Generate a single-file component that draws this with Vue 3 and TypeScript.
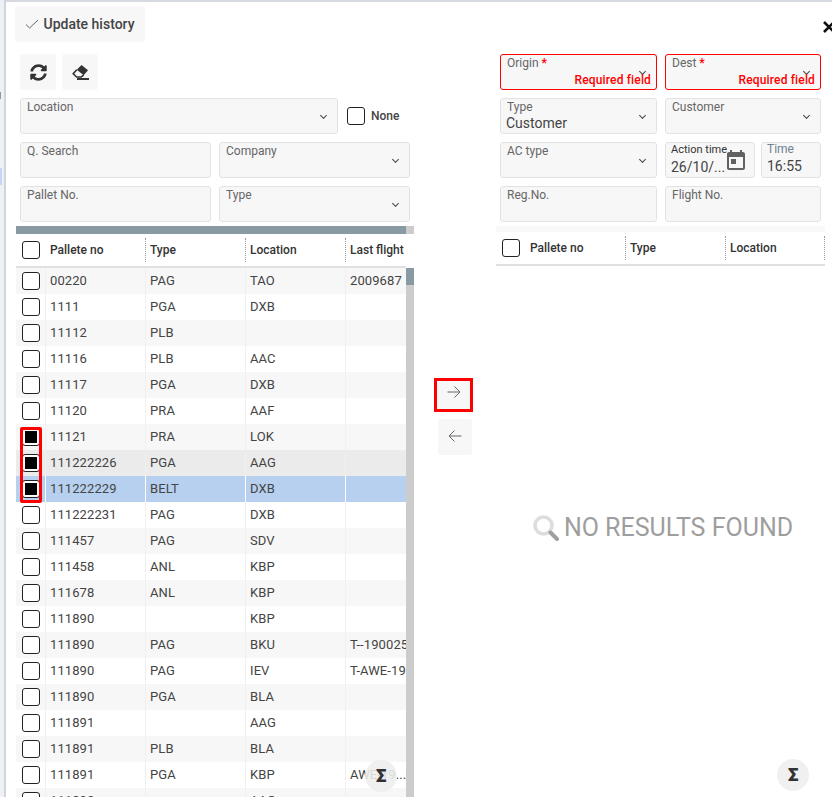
<script setup lang="ts">
interface Row {
  no: string
  type: string
  loc: string
  flight: string
  checked?: boolean
  state?: string
}

const rows: Row[] = [
  { no: '00220', type: 'PAG', loc: 'TAO', flight: '2009687' },
  { no: '1111', type: 'PGA', loc: 'DXB', flight: '' },
  { no: '11112', type: 'PLB', loc: '', flight: '' },
  { no: '11116', type: 'PLB', loc: 'AAC', flight: '' },
  { no: '11117', type: 'PGA', loc: 'DXB', flight: '' },
  { no: '11120', type: 'PRA', loc: 'AAF', flight: '' },
  { no: '11121', type: 'PRA', loc: 'LOK', flight: '', checked: true },
  { no: '111222226', type: 'PGA', loc: 'AAG', flight: '', checked: true, state: 'hover' },
  { no: '111222229', type: 'BELT', loc: 'DXB', flight: '', checked: true, state: 'selected' },
  { no: '111222231', type: 'PAG', loc: 'DXB', flight: '' },
  { no: '111457', type: 'PAG', loc: 'SDV', flight: '' },
  { no: '111458', type: 'ANL', loc: 'KBP', flight: '' },
  { no: '111678', type: 'ANL', loc: 'KBP', flight: '' },
  { no: '111890', type: '', loc: 'KBP', flight: '' },
  { no: '111890', type: 'PAG', loc: 'BKU', flight: 'T--190025' },
  { no: '111890', type: 'PAG', loc: 'IEV', flight: 'T-AWE-19' },
  { no: '111890', type: 'PGA', loc: 'BLA', flight: '' },
  { no: '111891', type: '', loc: 'AAG', flight: '' },
  { no: '111891', type: 'PLB', loc: 'BLA', flight: '' },
  { no: '111891', type: 'PGA', loc: 'KBP', flight: 'AWE-19...' },
  { no: '111892', type: '', loc: 'AAG', flight: '' }
]
</script>

<template>
  <div class="page">
    <div class="backdrop">
      <div class="backdrop-inner">
        <span class="bd-dark"></span>
        <span class="bd-blue"></span>
      </div>
    </div>

    <div class="dialog">
      <header class="dialog-head">
        <button class="btn update">
          <svg width="14" height="10" viewBox="0 0 14 10" fill="none" stroke="#666" stroke-width="1">
            <path d="M1 5.5L4.6 9L13 1" />
          </svg>
          <span>Update history</span>
        </button>
        <svg class="close" width="12" height="12" viewBox="0 0 12 12" stroke="#111" stroke-width="2.6" fill="none">
          <path d="M1 1L11 11M11 1L1 11" />
        </svg>
      </header>

      <div class="body">
        <section class="left">
          <div class="form">
            <div class="tools">
              <button class="btn icon">
                <svg width="17" height="17" viewBox="0 0 512 512" fill="#333">
                  <path d="M370.72 133.28C339.458 104.008 298.888 87.962 255.848 88c-77.458.068-144.328 53.178-162.791 126.85-1.344 5.363-6.122 9.15-11.651 9.15H24.103c-7.498 0-13.194-6.807-11.807-14.176C33.933 94.924 134.813 8 256 8c66.448 0 126.791 26.136 171.315 68.685L463.03 40.97C478.149 25.851 504 36.559 504 57.941V192c0 13.255-10.745 24-24 24H345.941c-21.382 0-32.09-25.851-16.971-40.971l41.75-41.749zM32 296h134.059c21.382 0 32.09 25.851 16.971 40.971l-41.75 41.75c31.262 29.273 71.835 45.319 114.876 45.28 77.418-.07 144.315-53.144 162.787-126.849 1.344-5.363 6.122-9.15 11.651-9.15h57.304c7.498 0 13.194 6.807 11.807 14.176C478.067 417.076 377.187 504 256 504c-66.448 0-126.791-26.136-171.315-68.685L48.97 471.03C33.851 486.149 8 475.441 8 454.059V320c0-13.255 10.745-24 24-24z" />
                </svg>
              </button>
              <button class="btn icon">
                <svg width="17" height="17" viewBox="0 0 17 17">
                  <path d="M9.5 1L16 6.2L11.7 11.2L4.8 5.8Z" fill="#333" />
                  <path d="M4.8 5.8L1.2 9.8L4.6 13H9.2L11.7 11.2" fill="none" stroke="#333" stroke-width="1.6" />
                  <rect x="5" y="14" width="12" height="2" fill="#333" />
                </svg>
              </button>
            </div>

            <div class="location-row">
              <div class="field grow">
                <span class="label">Location</span>
                <i class="chev"></i>
              </div>
              <label class="none">
                <span class="box"></span>
                <span>None</span>
              </label>
            </div>

            <div class="grid-2">
              <div class="field"><span class="label">Q. Search</span></div>
              <div class="field"><span class="label">Company</span><i class="chev"></i></div>
              <div class="field"><span class="label">Pallet No.</span></div>
              <div class="field"><span class="label">Type</span><i class="chev"></i></div>
            </div>
          </div>

          <div class="hscroll"><div class="hthumb"></div></div>

          <div class="thead">
            <div class="cell check"><span class="box"></span></div>
            <div class="th sep">Pallete no</div>
            <div class="th sep">Type</div>
            <div class="th sep">Location</div>
            <div class="th">Last flight</div>
          </div>

          <div class="tscroll">
            <div class="tbody">
              <div
                v-for="(r, i) in rows"
                :key="i"
                class="tr"
                :class="[r.state, { odd: i % 2 === 0 }]"
              >
                <div class="cell check">
                  <span class="box" :class="{ on: r.checked }"></span>
                </div>
                <div class="cell">{{ r.no }}</div>
                <div class="cell">{{ r.type }}</div>
                <div class="cell">{{ r.loc }}</div>
                <div class="cell last">{{ r.flight }}</div>
              </div>
            </div>
            <div class="vscroll"><div class="vthumb"></div></div>
          </div>
        </section>

        <section class="mid">
          <button class="btn arrow marked">
            <svg width="14" height="14" viewBox="0 0 14 14" fill="none" stroke="#666" stroke-width="1">
              <path d="M0.5 7H13M7.5 1.5L13 7L7.5 12.5" />
            </svg>
          </button>
          <button class="btn arrow plain">
            <svg width="14" height="14" viewBox="0 0 14 14" fill="none" stroke="#666" stroke-width="1">
              <path d="M13.5 7H1M6.5 1.5L1 7L6.5 12.5" />
            </svg>
          </button>
        </section>

        <section class="right">
          <div class="form">
            <div class="grid-right">
              <div class="field invalid">
                <span class="label">Origin <b>*</b></span>
                <i class="chev"></i>
                <span class="required">Required field</span>
              </div>
              <div class="field invalid">
                <span class="label">Dest <b>*</b></span>
                <i class="chev"></i>
                <span class="required">Required field</span>
              </div>
              <div class="field">
                <div class="stack">
                  <span class="label">Type</span>
                  <span class="value">Customer</span>
                </div>
                <i class="chev"></i>
              </div>
              <div class="field"><span class="label">Customer</span><i class="chev"></i></div>
              <div class="field"><span class="label">AC type</span><i class="chev"></i></div>
              <div class="datetime">
                <div class="field date">
                  <div class="stack">
                    <span class="label dark">Action time</span>
                    <span class="value">26/10/...</span>
                  </div>
                  <svg class="cal" width="24" height="24" viewBox="0 0 24 24" fill="#616161">
                    <path d="M19 3h-1V1h-2v2H8V1H6v2H5c-1.11 0-1.99.9-1.99 2L3 19c0 1.1.89 2 2 2h14c1.1 0 2-.9 2-2V5c0-1.1-.9-2-2-2zm0 16H5V8h14v11zM7 10h5v5H7z" />
                  </svg>
                </div>
                <div class="field time">
                  <div class="stack">
                    <span class="label blue">Time</span>
                    <span class="value">16:55</span>
                  </div>
                </div>
              </div>
              <div class="field"><span class="label">Reg.No.</span></div>
              <div class="field"><span class="label">Flight No.</span></div>
            </div>
          </div>

          <div class="strip"></div>

          <div class="thead right-head">
            <div class="cell check"><span class="box"></span></div>
            <div class="th sep">Pallete no</div>
            <div class="th sep">Type</div>
            <div class="th sep">Location</div>
          </div>

          <div class="empty">
            <svg width="26" height="26" viewBox="0 0 26 26" fill="none">
              <circle cx="10.5" cy="10.5" r="8.5" stroke="#dddddd" stroke-width="3.6" />
              <path d="M17.5 17.5L24 24" stroke="#a0a0a0" stroke-width="4" stroke-linecap="round" />
            </svg>
            <span>NO RESULTS FOUND</span>
          </div>
        </section>
      </div>
    </div>

    <div class="marker"></div>
    <button class="sigma sigma-left">Σ</button>
    <button class="sigma sigma-right">Σ</button>
  </div>
</template>

<style scoped>
.page {
  position: relative;
  display: flex;
  width: 832px;
  height: 797px;
  overflow: hidden;
  background: #fff;
  font-family: Roboto, "Liberation Sans", sans-serif;
  font-size: 13px;
  color: #444;
}
.backdrop {
  flex: 0 0 6px;
  display: flex;
  background: #fff;
}
.backdrop-inner {
  position: relative;
  width: 6px;
  height: 100%;
  box-sizing: border-box;
  background: #eef0f4;
  border-right: 2px solid #cdd5df;
}
.bd-dark,
.bd-blue {
  display: block;
  position: absolute;
  left: 0;
  width: 1px;
}
.bd-dark {
  top: 92px;
  height: 7px;
  background: #8d989f;
}
.bd-blue {
  top: 168px;
  height: 17px;
  width: 2px;
  background: #c4d8f5;
}
.dialog {
  flex: 1;
  min-width: 0;
  display: flex;
  flex-direction: column;
  border-top: 2px solid #d6dae0;
}
.dialog-head {
  display: flex;
  justify-content: space-between;
  align-items: flex-start;
  height: 40px;
  padding: 4px 0 0 9px;
  margin-bottom: 12px;
  box-sizing: border-box;
}
.btn {
  display: flex;
  align-items: center;
  justify-content: center;
  border: 0;
  margin: 0;
  padding: 0;
  background: #f7f7f7;
  border-radius: 3px;
  font-family: inherit;
}
.update {
  width: 130px;
  height: 36px;
  gap: 4px;
  font-size: 14px;
  font-weight: 500;
  color: #444;
}
.close {
  margin: 15px -3px 0 0;
}
.body {
  flex: 1;
  min-height: 0;
  display: flex;
}
.left {
  flex: 0 0 398px;
  margin-left: 10px;
  display: flex;
  flex-direction: column;
  min-height: 0;
}
.form {
  padding: 0 4px;
  display: flex;
  flex-direction: column;
  gap: 8px;
}
.tools {
  display: flex;
  gap: 6px;
}
.icon {
  width: 36px;
  height: 36px;
}
.location-row {
  display: flex;
  align-items: center;
  gap: 9px;
}
.grow {
  flex: 0 0 318px;
}
.none {
  display: flex;
  align-items: center;
  gap: 6px;
  font-size: 12px;
  font-weight: 500;
  color: #444;
}
.grid-2 {
  display: grid;
  grid-template-columns: 191px 191px;
  gap: 8px;
}
.field {
  position: relative;
  display: flex;
  justify-content: space-between;
  align-items: flex-start;
  height: 36px;
  box-sizing: border-box;
  padding: 1px 11px 0 6px;
  background: #f7f7f7;
  border: 1px solid #e2e2e2;
  border-radius: 3px;
}
.label {
  font-size: 12px;
  line-height: 14px;
  color: #666;
  white-space: nowrap;
}
.label b {
  color: #f00;
  font-weight: 700;
}
.label.dark {
  font-size: 11px;
  color: #333;
}
.label.blue {
  margin-top: -1px;
  color: #6f8290;
}
.chev {
  display: block;
  flex: none;
  align-self: center;
  width: 5px;
  height: 5px;
  margin-top: -3px;
  box-sizing: border-box;
  border-right: 1.3px solid #444;
  border-bottom: 1.3px solid #444;
  transform: rotate(45deg);
}
.invalid {
  border-color: #f00;
}
.required {
  position: absolute;
  right: 5px;
  bottom: 2px;
  font-size: 12px;
  line-height: 14px;
  font-weight: 500;
  letter-spacing: 0.15px;
  color: #f00;
}
.stack {
  display: flex;
  flex-direction: column;
  min-width: 0;
}
.value {
  margin: 1px 0 0 -1px;
  font-size: 14px;
  line-height: 16px;
  color: #444;
  white-space: nowrap;
}
.datetime {
  display: flex;
  gap: 6px;
}
.date {
  flex: 0 0 90px;
  padding-left: 5px;
  padding-top: 0;
}
.date .value,
.time .value {
  margin: 1px 0 0 0;
  line-height: 18px;
}
.time {
  flex: 0 0 60px;
  padding-left: 5px;
  padding-top: 0;
}
.cal {
  position: absolute;
  left: 58px;
  top: 6px;
}
.box {
  display: block;
  flex: none;
  position: relative;
  width: 18px;
  height: 18px;
  box-sizing: border-box;
  background: #fff;
  border: 1.5px solid #222;
  border-radius: 3px;
}
.box.on::after {
  content: "";
  position: absolute;
  left: 1.5px;
  top: 1.5px;
  width: 12px;
  height: 12px;
  background: #000;
}
.hscroll {
  display: flex;
  height: 8px;
  margin-top: 4px;
  background: #ccc;
}
.hthumb {
  width: 390px;
  background: #8a9aa3;
}
.thead {
  display: grid;
  grid-template-columns: 30px 100px 100px 100px 60px;
  width: 390px;
  height: 34px;
  box-sizing: border-box;
  align-items: center;
  border-bottom: 2px solid #e0e0e0;
  overflow: hidden;
}
.thead .check {
  border-right: 0;
}
.th {
  display: flex;
  align-items: center;
  height: 24px;
  box-sizing: border-box;
  padding-left: 4px;
  font-size: 12px;
  font-weight: 500;
  color: #333;
  white-space: nowrap;
  overflow: hidden;
}
.sep {
  border-right: 1px dotted #999;
}
.tscroll {
  flex: 1;
  min-height: 0;
  display: flex;
  overflow: hidden;
}
.tbody {
  width: 390px;
  flex: none;
}
.tr {
  display: grid;
  grid-template-columns: 30px 100px 100px 100px 60px;
  height: 26px;
  background: #fff;
}
.tr.odd {
  background: #f7f7f7;
}
.tr.hover {
  background: #ebebeb;
}
.tr.selected {
  background: #b7d0f0;
}
.cell {
  display: flex;
  align-items: center;
  box-sizing: border-box;
  padding-left: 4px;
  border-right: 1px solid #f0f0f0;
  overflow: hidden;
  white-space: nowrap;
  font-size: 13px;
  line-height: 26px;
  letter-spacing: 0.1px;
  color: #444;
}
.tr.selected .cell {
  border-right-color: #fff;
}
.cell.check {
  padding-left: 6px;
}
.cell.last {
  border-right: 0;
}
.vscroll {
  flex: 0 0 8px;
  background: #ccc;
}
.vthumb {
  height: 17px;
  background: #8a9aa3;
}
.mid {
  flex: 0 0 82px;
  display: flex;
  flex-direction: column;
  align-items: flex-start;
  padding-top: 324px;
  box-sizing: border-box;
}
.arrow {
  background: #f7f7f7;
}
.marked {
  width: 39px;
  height: 34px;
  margin-left: 20px;
  padding-bottom: 6px;
  box-sizing: border-box;
  border: 3px solid #f00;
  border-radius: 0;
}
.plain {
  width: 34px;
  height: 36px;
  margin: 7px 0 0 24px;
  padding-bottom: 2px;
}
.right {
  flex: 0 0 329px;
  display: flex;
  flex-direction: column;
}
.grid-right {
  display: grid;
  grid-template-columns: 157px 156px;
  gap: 8px;
}
.strip {
  height: 6px;
  margin-top: 4px;
  background: #f8f8f8;
}
.right-head {
  grid-template-columns: 30px 100px 100px 99px;
  width: 329px;
  height: 34px;
}
.empty {
  display: flex;
  align-items: center;
  justify-content: center;
  gap: 5px;
  padding: 240px 0 0 5px;
  height: 44px;
  font-size: 25px;
  line-height: 30px;
  color: #9e9e9e;
}
.marker {
  position: absolute;
  left: 20px;
  top: 427px;
  width: 22px;
  height: 76px;
  box-sizing: border-box;
  border: 3px solid #f00;
  border-radius: 2px;
}
.sigma {
  position: absolute;
  width: 32px;
  height: 32px;
  padding: 0;
  border: 0;
  border-radius: 50%;
  background: rgba(238, 238, 238, 0.88);
  font-family: Roboto, sans-serif;
  font-size: 19px;
  font-weight: 900;
  line-height: 32px;
  text-align: center;
  color: #333;
}
.sigma-left {
  left: 365px;
  top: 760px;
}
.sigma-right {
  left: 777px;
  top: 759px;
}
</style>
